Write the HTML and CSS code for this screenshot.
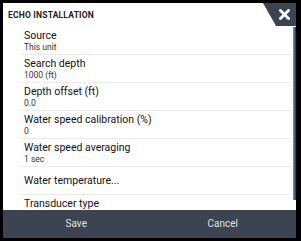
FILE: index.html
```html
<!DOCTYPE html>
<html lang="en">

<head>
    <meta charset="UTF-8">
    <title>Echo Installation</title>
    <link rel="stylesheet" href="styles.css">
</head>

<body>
    <div class="dialog">
        <div class="main">
            <div class="list">
                <div class="title">ECHO INSTALLATION</div>
                <div class="row">
                    <div class="label">Source</div>
                    <div class="value">This unit</div>
                </div>
                <div class="row">
                    <div class="label">Search depth</div>
                    <div class="value">1000 (ft)</div>
                </div>
                <div class="row">
                    <div class="label">Depth offset (ft)</div>
                    <div class="value">0.0</div>
                </div>
                <div class="row">
                    <div class="label">Water speed calibration (%)</div>
                    <div class="value">0</div>
                </div>
                <div class="row">
                    <div class="label">Water speed averaging</div>
                    <div class="value">1 sec</div>
                </div>
                <div class="row single">
                    <div class="label">Water temperature...</div>
                </div>
                <div class="row last">
                    <div class="label">Transducer type</div>
                </div>
            </div>
            <div class="scroll">
                <div class="thumb"></div>
            </div>
            <div class="close">
                <svg width="11" height="11" viewBox="0 0 11 11">
                    <path d="M1.5 1.5 L9.5 9.5 M9.5 1.5 L1.5 9.5" stroke="#fff" stroke-width="2.8" stroke-linecap="square" />
                </svg>
            </div>
        </div>
        <div class="footer">
            <div class="btn">Save</div>
            <div class="btn">Cancel</div>
        </div>
    </div>
</body>

</html>
```

FILE: styles.css
```css
body {
    margin: 0;
    background-color: #000;
    font-family: Roboto, "Liberation Sans", sans-serif;
}

.dialog {
    width: 293px;
    height: 235px;
    padding: 3px 5px 3px 3px;
    display: flex;
    flex-direction: column;
}

.main {
    position: relative;
    display: flex;
    height: 207px;
    background-color: #fff;
    overflow: hidden;
}

.list {
    flex: 1;
}

.title {
    height: 24px;
    padding-left: 5px;
    font-size: 8.5px;
    font-weight: bold;
    letter-spacing: 0.2px;
    line-height: 24px;
    color: #222;
}

.row {
    height: 27px;
    margin-left: 17px;
    margin-right: 1px;
    border-bottom: 1px solid #ebebeb;
    padding-left: 4px;
}

.label {
    font-size: 10.5px;
    line-height: 13px;
    padding-top: 2px;
    color: #111;
}

.value {
    font-size: 8.5px;
    line-height: 10px;
    color: #333;
}

.row.single .label {
    line-height: 27px;
    padding-top: 0;
}

.row.last {
    border-bottom: none;
}

.scroll {
    width: 3px;
    padding-top: 24px;
    background-color: #fff;
}

.thumb {
    height: 173px;
    background: linear-gradient(to right, #6a9cc0, #3d6f95, #1c2e3d);
}

.close {
    position: absolute;
    top: 0;
    right: 0;
    width: 33px;
    height: 23px;
    background-color: #3b4450;
    clip-path: polygon(0 0, 100% 0, 100% 100%, 13px 100%);
    display: flex;
    align-items: center;
    justify-content: center;
    padding-left: 9px;
    box-sizing: border-box;
}

.close svg {
    display: block;
}

.footer {
    display: flex;
    height: 28px;
    background-color: #3b4450;
}

.btn {
    flex: 1;
    text-align: center;
    font-size: 10px;
    line-height: 28px;
    color: #dfe3e8;
}
```
